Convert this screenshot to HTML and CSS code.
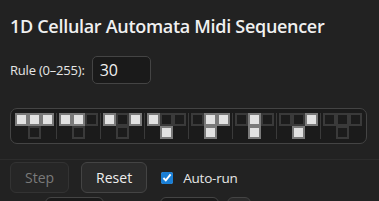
FILE: index.html
```html
<!DOCTYPE html>
<html lang="en">
<head>
<meta charset="UTF-8" />
<meta name="viewport" content="width=device-width, initial-scale=1" />
<title>1D Cellular Automata Midi Sequencer</title>
<link rel="stylesheet" href="styles.css">
</head>
<body>
  <h1>1D Cellular Automata Midi Sequencer</h1>

  <div class="rule-row">
    <label for="rule">Rule (0–255):</label>
    <input id="rule" type="number" min="0" max="255" value="30">
  </div>

  <div class="rule-map" aria-label="Rule table">
    <div class="group"><div class="top"><i class="on"></i><i class="on"></i><i class="on"></i></div><div class="out"><i></i></div></div>
    <div class="group"><div class="top"><i class="on"></i><i class="on"></i><i></i></div><div class="out"><i></i></div></div>
    <div class="group"><div class="top"><i class="on"></i><i></i><i class="on"></i></div><div class="out"><i></i></div></div>
    <div class="group"><div class="top"><i class="on"></i><i></i><i></i></div><div class="out"><i class="on"></i></div></div>
    <div class="group"><div class="top"><i></i><i class="on"></i><i class="on"></i></div><div class="out"><i class="on"></i></div></div>
    <div class="group"><div class="top"><i></i><i class="on"></i><i></i></div><div class="out"><i class="on"></i></div></div>
    <div class="group"><div class="top"><i></i><i></i><i class="on"></i></div><div class="out"><i class="on"></i></div></div>
    <div class="group"><div class="top"><i></i><i></i><i></i></div><div class="out"><i></i></div></div>
  </div>

  <div class="controls">
    <button disabled>Step</button>
    <button>Reset</button>
    <label class="check"><input type="checkbox" checked> Auto-run</label>
  </div>

  <!-- next row of settings, only its top edge is in view -->
  <div class="settings">
    <span class="gap-a"></span>
    <input class="field" type="text" aria-label="Tempo">
    <span class="gap-b"></span>
    <input class="field" type="text" aria-label="Cells">
    <button class="small" aria-label="Add"></button>
  </div>
</body>
</html>
```

FILE: styles.css
```css
* {
  box-sizing: border-box;
}

body {
  background: #222;
  color: #e6e6e6;
  font-family: 'Open Sans', 'Noto Sans', sans-serif;
  margin: 0;
  padding: 14px 10px 0;
  height: 201px;
  overflow: hidden;
}

h1 {
  font-size: 18px;
  line-height: 24px;
  font-weight: 600;
  letter-spacing: -0.3px;
  margin: 0;
  color: #f0f0f0;
}

.rule-row {
  display: flex;
  align-items: center;
  gap: 7px;
  margin-top: 18px;
  font-size: 13px;
  letter-spacing: -0.2px;
}

.rule-row input {
  width: 59px;
  height: 28px;
  background: #1a1a1a;
  border: 1px solid #444;
  border-radius: 5px;
  color: #f0f0f0;
  font-family: inherit;
  font-size: 16px;
  padding: 0 7px;
  -moz-appearance: textfield;
}

.rule-row input::-webkit-inner-spin-button {
  -webkit-appearance: none;
}

.rule-map {
  display: flex;
  width: 357px;
  margin-top: 24px;
  padding: 4px;
  background: #1b1b1b;
  border: 1px solid #444;
  border-radius: 7px;
}

.group {
  display: flex;
  flex-direction: column;
  align-items: center;
  padding: 0 2px;
  border-left: 1px solid #3a3a3a;
}

.group:first-child {
  border-left: none;
  padding-left: 0;
}

.group:last-child {
  padding-right: 0;
}

.top, .out {
  display: flex;
}

.rule-map i {
  display: block;
  width: 13px;
  height: 13px;
  background: #1c1c1c;
  border: 2px solid #3a3a3a;
}

.rule-map i.on {
  background: #e2e2e2;
  border-color: #7a7a7a;
}

.controls {
  display: flex;
  align-items: center;
  margin: 15px -10px 0;
  padding: 2px 10px 0;
  border-top: 1px solid #2c2c2c;
}

button {
  height: 31px;
  background: #2b2b2b;
  border: 1px solid #444;
  border-radius: 6px;
  color: #eee;
  font-family: inherit;
  font-size: 14px;
  padding: 0 14px;
  margin-right: 12px;
}

button:disabled {
  color: #7a7a7a;
  background: #262626;
  border-color: #333;
}

.check {
  display: flex;
  align-items: center;
  gap: 10px;
  font-size: 13.5px;
  letter-spacing: -0.2px;
  margin-left: 2px;
}

.check input {
  width: 12px;
  height: 12px;
  margin: 0;
  accent-color: #1a7fd6;
}

.settings {
  display: flex;
  align-items: flex-start;
  gap: 8px;
  margin-top: 4px;
}

.field {
  width: 59px;
  height: 28px;
  background: #1a1a1a;
  border: 1px solid #444;
  border-radius: 6px;
}

.gap-a {
  width: 27px;
}

.gap-b {
  width: 40px;
}

.small {
  width: 24px;
  padding: 0;
  margin: 0;
}
```
